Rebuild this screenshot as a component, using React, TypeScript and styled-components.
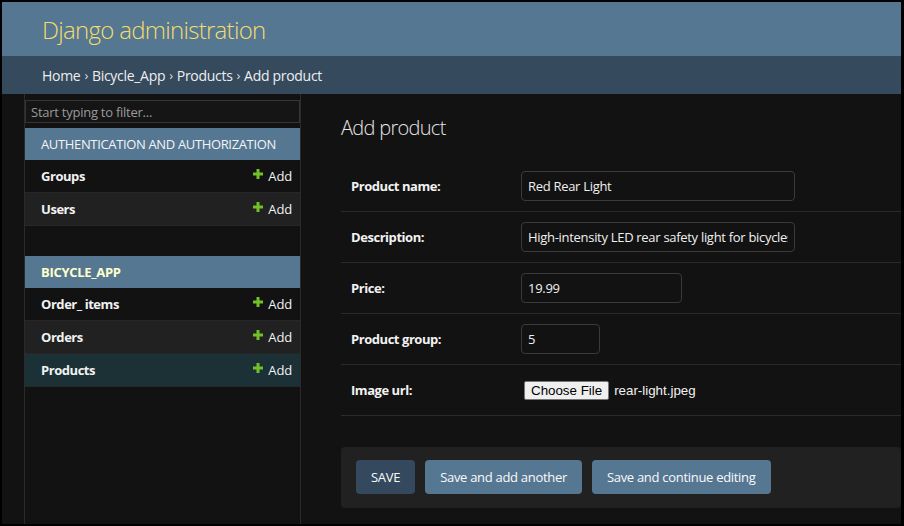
import React from 'react';
import styled, { createGlobalStyle } from 'styled-components';

const FONT = `"Open Sans", "Noto Sans", sans-serif`;

const Global = createGlobalStyle`
  html, body { margin: 0; padding: 0; background: #000; }
  body { font-family: ${FONT}; }
  * { box-sizing: border-box; }
`;

const Frame = styled.div`
  width: 899px;
  height: 522px;
  margin: 2px 0 0 2px;
  background: #121212;
  display: flex;
  flex-direction: column;
  overflow: hidden;
`;

const Header = styled.header`
  height: 54px;
  flex: none;
  background: #557792;
  display: flex;
  align-items: center;
  padding: 0 40px;
`;

const Brand = styled.h1`
  margin: 0;
  font-size: 24px;
  font-weight: 300;
  letter-spacing: -0.7px;
  color: #f3dc6b;
`;

const Crumbs = styled.nav`
  height: 38px;
  flex: none;
  background: #354a5c;
  display: flex;
  align-items: center;
  padding: 0 40px;
  font-size: 14px;
  letter-spacing: -0.3px;
  color: #eeeeee;
  gap: 4px;
`;

const Sep = styled.span`
  color: #dddddd;
  font-size: 13px;
`;

const Main = styled.div`
  flex: 1;
  display: flex;
  min-height: 0;
`;

const Toggle = styled.div`
  width: 23px;
  flex: none;
  border-right: 1px solid #2b2b2b;
  background: #121212;
`;

const Sidebar = styled.aside`
  width: 276px;
  flex: none;
  border-right: 1px solid #2b2b2b;
  background: #121212;
  display: flex;
  flex-direction: column;
`;

const Filter = styled.input`
  margin: 6px 0 5px;
  height: 23px;
  width: 100%;
  border: 1px solid #353535;
  background: #151515;
  color: #eee;
  font-family: ${FONT};
  font-size: 13px;
  letter-spacing: -0.25px;
  padding: 0 5px;
  outline: none;
  &::placeholder { color: #9a9a9a; }
`;

const Module = styled.div`
  margin-bottom: 30px;
`;

const Caption = styled.div<{ $current?: boolean }>`
  height: 32px;
  background: #557792;
  display: flex;
  align-items: center;
  padding-left: 16px;
  font-size: 13px;
  letter-spacing: ${(p) => (p.$current ? '-0.3px' : '-0.35px')};
  text-transform: uppercase;
  font-weight: ${(p) => (p.$current ? 700 : 400)};
  color: ${(p) => (p.$current ? '#ffffcc' : '#f4f4f4')};
`;

const NavRow = styled.div<{ $tone: 'dark' | 'light' | 'selected' }>`
  height: 33px;
  display: flex;
  align-items: center;
  justify-content: space-between;
  padding: 0 8px 0 16px;
  border-bottom: 1px solid #272727;
  background: ${(p) =>
    p.$tone === 'selected' ? '#1b3136' : p.$tone === 'light' ? '#212121' : '#121212'};
`;

const NavName = styled.span`
  font-size: 13px;
  font-weight: 700;
  letter-spacing: -0.45px;
  color: #f2f2f2;
`;

const AddLink = styled.span`
  display: flex;
  align-items: center;
  gap: 5px;
  font-size: 13px;
  letter-spacing: -0.15px;
  color: #f2f2f2;
  svg { margin-top: -4px; }
`;

const Content = styled.main`
  flex: 1;
  min-width: 0;
  padding: 20px 0 0 40px;
  overflow: hidden;
`;

const Title = styled.h1`
  margin: 0 0 20px;
  font-size: 20px;
  font-weight: 300;
  letter-spacing: -0.7px;
  color: #e6e6e6;
  line-height: 27px;
`;

const FormRow = styled.div`
  display: flex;
  align-items: center;
  padding: 10px;
  border-bottom: 1px solid #2a2a2a;
`;

const Label = styled.label`
  width: 170px;
  flex: none;
  font-size: 13px;
  font-weight: 700;
  letter-spacing: -0.45px;
  color: #f2f2f2;
`;

const TextInput = styled.input<{ $w: number }>`
  width: ${(p) => p.$w}px;
  height: 30px;
  border: 1px solid #3a3a3a;
  border-radius: 4px;
  background: #121212;
  color: #f0f0f0;
  font-family: ${FONT};
  font-size: 13px;
  letter-spacing: -0.3px;
  padding: 5px 6px;
  outline: none;
`;

const FileBox = styled.div`
  height: 30px;
  display: flex;
  align-items: center;
  gap: 5px;
  margin-left: 3px;
  font-family: "Liberation Sans", Arial, sans-serif;
  font-size: 13.33px;
  color: #f2f2f2;
`;

const ChooseBtn = styled.span`
  display: inline-flex;
  align-items: center;
  height: 19px;
  padding: 0 6px;
  background: #efefef;
  border: 1px solid #767676;
  border-radius: 2px;
  color: #000;
`;

const SubmitRow = styled.div`
  margin-top: 31px;
  background: #212121;
  border-radius: 4px;
  padding: 13px 15px 14px;
  display: flex;
  gap: 10px;
`;

const Button = styled.button<{ $primary?: boolean }>`
  height: 34px;
  padding: 0 15px;
  border: none;
  border-radius: 4px;
  background: ${(p) => (p.$primary ? '#34495e' : '#557792')};
  color: #fafafa;
  font-family: ${FONT};
  font-size: 13px;
  letter-spacing: -0.3px;
  cursor: pointer;
`;

const Plus = () => (
  <svg width="10" height="10" viewBox="0 0 10 10" aria-hidden="true">
    <path d="M3.5 0h3v3.5H10v3H6.5V10h-3V6.5H0v-3h3.5z" fill="#70bf2b" />
  </svg>
);

type Item = { name: string; tone: 'dark' | 'light' | 'selected' };

const authItems: Item[] = [
  { name: 'Groups', tone: 'dark' },
  { name: 'Users', tone: 'light' },
];
const appItems: Item[] = [
  { name: 'Order_ items', tone: 'dark' },
  { name: 'Orders', tone: 'light' },
  { name: 'Products', tone: 'selected' },
];

const NavItems = ({ items }: { items: Item[] }) => (
  <>
    {items.map((it) => (
      <NavRow key={it.name} $tone={it.tone}>
        <NavName>{it.name}</NavName>
        <AddLink>
          <Plus />
          Add
        </AddLink>
      </NavRow>
    ))}
  </>
);

export default function App() {
  return (
    <>
      <Global />
      <Frame>
        <Header>
          <Brand>Django administration</Brand>
        </Header>
        <Crumbs>
          <span>Home</span>
          <Sep>›</Sep>
          <span>Bicycle_App</span>
          <Sep>›</Sep>
          <span>Products</span>
          <Sep>›</Sep>
          <span>Add product</span>
        </Crumbs>
        <Main>
          <Toggle />
          <Sidebar>
            <Filter placeholder="Start typing to filter..." />
            <Module>
              <Caption>Authentication and Authorization</Caption>
              <NavItems items={authItems} />
            </Module>
            <Module>
              <Caption $current>Bicycle_App</Caption>
              <NavItems items={appItems} />
            </Module>
          </Sidebar>
          <Content>
            <Title>Add product</Title>
            <FormRow>
              <Label>Product name:</Label>
              <TextInput $w={274} defaultValue="Red Rear Light" />
            </FormRow>
            <FormRow>
              <Label>Description:</Label>
              <TextInput $w={274} defaultValue="High-intensity LED rear safety light for bicycles" />
            </FormRow>
            <FormRow>
              <Label>Price:</Label>
              <TextInput $w={161} defaultValue="19.99" />
            </FormRow>
            <FormRow>
              <Label>Product group:</Label>
              <TextInput $w={79} defaultValue="5" />
            </FormRow>
            <FormRow>
              <Label>Image url:</Label>
              <FileBox>
                <ChooseBtn>Choose File</ChooseBtn>
                <span>rear-light.jpeg</span>
              </FileBox>
            </FormRow>
            <SubmitRow>
              <Button $primary>SAVE</Button>
              <Button>Save and add another</Button>
              <Button>Save and continue editing</Button>
            </SubmitRow>
          </Content>
        </Main>
      </Frame>
    </>
  );
}
